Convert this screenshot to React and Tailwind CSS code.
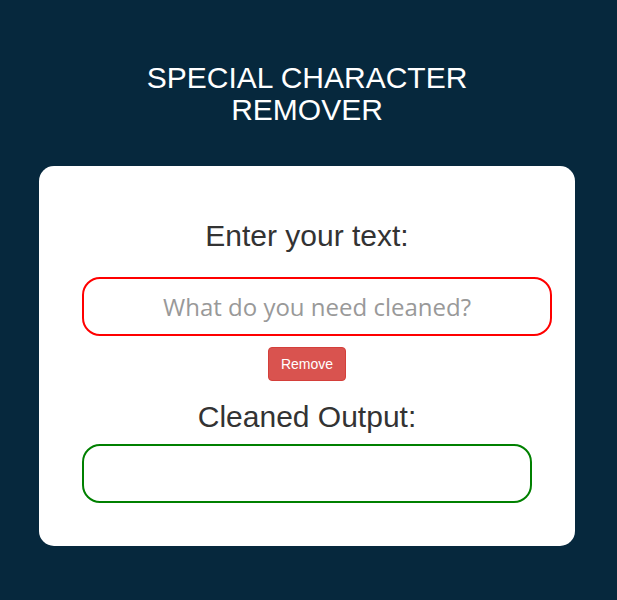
import React, { useState } from 'react';

const ARIAL = { fontFamily: '"Liberation Sans", Arial, sans-serif' };

export default function App() {
  const [text, setText] = useState('');
  const [cleaned, setCleaned] = useState('');

  const handleRemove = () => {
    setCleaned(text.replace(/[^a-zA-Z0-9\s]/g, ''));
  };

  return (
    <div className="min-h-screen w-full bg-[#06283d] pt-[62px] pl-[39px]" style={ARIAL}>
      {/* Title */}
      <h1 className="w-[536px] text-center text-[30px] leading-[32px] font-normal text-white">
        SPECIAL CHARACTER
        <br />
        REMOVER
      </h1>

      {/* Card */}
      <div className="mt-[40px] w-[536px] rounded-[15px] bg-white px-[43px] pt-[53px] pb-[43px] flex flex-col items-center">
        <h2 className="text-[30px] leading-[33px] text-[#333333] font-normal">Enter your text:</h2>

        <input
          type="text"
          value={text}
          onChange={(e) => setText(e.target.value)}
          placeholder="What do you need cleaned?"
          className="mt-[25px] self-start w-[470px] h-[59px] rounded-[18px] border-2 border-[#ff0000] bg-white text-center text-[24px] text-[#555] placeholder:text-[#999999] outline-none"
          style={{ fontFamily: '"Open Sans", "DejaVu Sans", sans-serif' }}
        />

        <button
          onClick={handleRemove}
          className="mt-[11px] h-[34px] px-[12px] rounded-[4px] border border-[#d43f3a] bg-[#d9534f] text-[14px] leading-[20px] text-white"
        >
          Remove
        </button>

        <h2 className="mt-[19px] text-[30px] leading-[33px] text-[#333333] font-normal">Cleaned Output:</h2>

        <div className="mt-[11px] w-full h-[59px] rounded-[18px] border-2 border-[#008000] bg-white flex items-center justify-center text-[24px] text-[#333]">
          {cleaned}
        </div>
      </div>
    </div>
  );
}
